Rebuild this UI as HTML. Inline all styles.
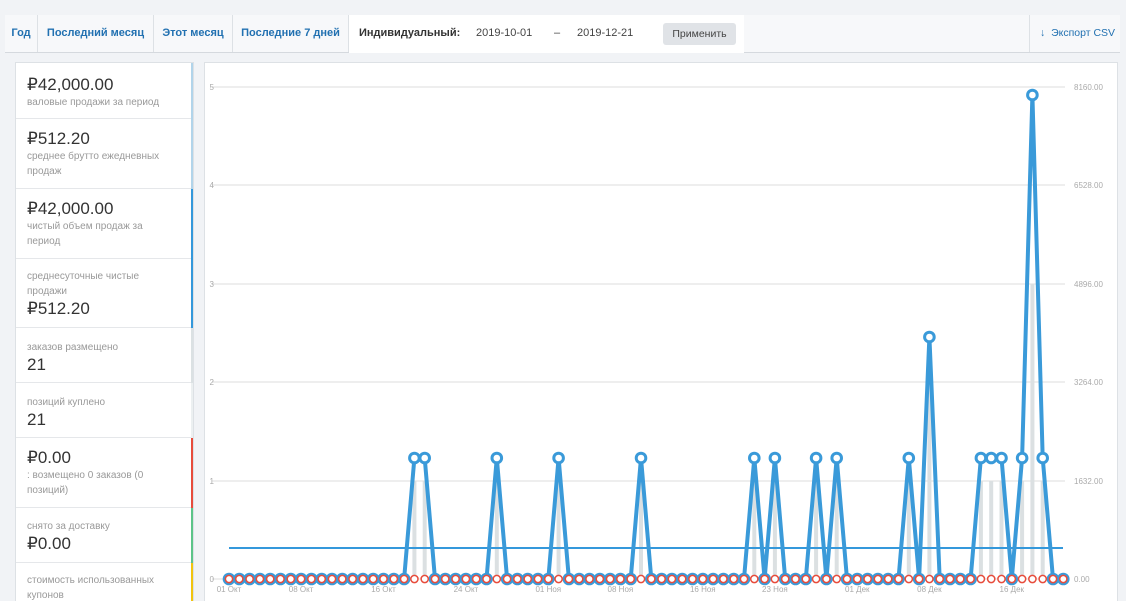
<!DOCTYPE html>
<html style="width:1126px;height:601px;overflow:hidden"><head><meta charset="utf-8"><style>
*{box-sizing:border-box;margin:0;padding:0}
body{width:1126px;height:601px;overflow:hidden;background:#f1f3f6;font-family:"Liberation Sans",sans-serif;position:relative}
.tabs{position:absolute;left:5px;top:15px;width:1115px;height:38px;background:#f7f8fa;border-bottom:1px solid #d5d9de}
.tab{position:absolute;top:0;height:37px;line-height:37px;font-size:11px;color:#2271b1;font-weight:bold;border-right:1px solid #dde1e5;text-align:center}
.active{position:absolute;left:344px;top:0;width:395px;height:38px;background:#fff;font-size:11px}
.sb{position:absolute;left:15px;top:62px;width:179px;height:545px;background:#fff;border:1px solid #dde1e5;border-bottom:0;overflow:hidden}
.row{position:absolute;left:0;width:179px;border-bottom:1px solid #e5e7ea;padding:0 30px 0 11px}
.row .bar{position:absolute;right:0;top:0;bottom:-1px;width:4px}
.big{font-size:17px;color:#333;line-height:20px}
.sm{font-size:10px;color:#999;line-height:15px}
.chart{position:absolute;left:204px;top:62px;width:914px;height:545px;background:#fff;border:1px solid #dde1e5;border-bottom:0}
</style></head><body>
<div class="tabs">
<div class="tab" style="left:0;width:33px">Год</div>
<div class="tab" style="left:33px;width:116px">Последний месяц</div>
<div class="tab" style="left:149px;width:79px">Этот месяц</div>
<div class="tab" style="left:228px;width:116px">Последние 7 дней</div>
<div class="active">
<span style="position:absolute;left:10px;top:12px;font-weight:bold;color:#333">Индивидуальный:</span>
<span style="position:absolute;left:127px;top:12px;color:#444">2019-10-01</span>
<span style="position:absolute;left:205px;top:12px;color:#444">–</span>
<span style="position:absolute;left:228px;top:12px;color:#444">2019-12-21</span>
<span style="position:absolute;left:314px;top:8px;width:73px;height:22px;background:#e0e3e7;border-radius:3px;font-size:10.5px;color:#444;text-align:center;line-height:22px">Применить</span>
</div>
<div style="position:absolute;left:1024px;top:0;height:37px;border-left:1px solid #dde1e5;padding-left:10px;line-height:37px;font-size:10.5px;color:#2271b1">↓&nbsp; Экспорт CSV</div>
</div>
<div class="sb">
<div class="row" style="top:0;height:56px;padding-top:12px"><div class="big">₽42,000.00</div><div class="sm">валовые продажи за период</div><div class="bar" style="background:#b1d4ea"></div></div>
<div class="row" style="top:56px;height:70px;padding-top:10px"><div class="big">₽512.20</div><div class="sm">среднее брутто ежедневных продаж</div><div class="bar" style="background:#b1d4ea"></div></div>
<div class="row" style="top:126px;height:70px;padding-top:10px"><div class="big">₽42,000.00</div><div class="sm">чистый объем продаж за период</div><div class="bar" style="background:#3498db"></div></div>
<div class="row" style="top:196px;height:69px;padding-top:10px"><div class="sm">среднесуточные чистые продажи</div><div class="big">₽512.20</div><div class="bar" style="background:#3498db"></div></div>
<div class="row" style="top:265px;height:55px;padding-top:12px"><div class="sm">заказов размещено</div><div class="big">21</div><div class="bar" style="background:#dbe1e3"></div></div>
<div class="row" style="top:320px;height:55px;padding-top:12px"><div class="sm">позиций куплено</div><div class="big">21</div><div class="bar" style="background:#ecf0f1"></div></div>
<div class="row" style="top:375px;height:70px;padding-top:10px"><div class="big">₽0.00</div><div class="sm">: возмещено 0 заказов (0 позиций)</div><div class="bar" style="background:#e74c3c"></div></div>
<div class="row" style="top:445px;height:55px;padding-top:11px"><div class="sm">снято за доставку</div><div class="big">₽0.00</div><div class="bar" style="background:#5cc488"></div></div>
<div class="row" style="top:500px;height:50px;padding-top:10px;border:none"><div class="sm">стоимость использованных купонов</div><div class="bar" style="background:#f1c40f"></div></div>
</div>
<div class="chart"></div>
<svg id="g" width="1126" height="601" style="position:absolute;left:0;top:0" font-family="Liberation Sans,sans-serif"></svg>
<script>
var s='',X=function(i){return 229+i*10.3};
var gy=[579,481,382,284,185,87],rl=['0.00','1632.00','3264.00','4896.00','6528.00','8160.00'];
for(var k=0;k<6;k++){s+='<line x1="212" x2="1065" y1="'+gy[k]+'" y2="'+gy[k]+'" stroke="#e8e8e8" stroke-width="1.5"/><text x="214" y="'+(gy[k]+3)+'" font-size="8" fill="#aaa" text-anchor="end">'+k+'</text><text x="1074" y="'+(gy[k]+3)+'" font-size="8" fill="#aaa">'+rl[k]+'</text>';}
var pk={18:458,19:458,26:458,32:458,40:458,51:458,53:458,57:458,59:458,66:458,68:337,73:458,74:458,75:458,77:458,78:95,79:458};
var bh={68:382,78:284};
for(var i in pk){s+='<rect x="'+(X(+i)-2)+'" y="'+(bh[i]||481)+'" width="4" height="'+(579-(bh[i]||481))+'" fill="#dbe0e2"/>';}
s+='<line x1="229" x2="1063" y1="548" y2="548" stroke="#3498db" stroke-width="2"/>';
var p=[];for(var i=0;i<82;i++)p.push(X(i)+','+(pk[i]||579));
s+='<polyline points="'+p.join(' ')+'" fill="none" stroke="#3a9ad9" stroke-width="4" stroke-linejoin="round"/>';
for(var i=0;i<82;i++){var y=pk[i]||579;s+='<circle cx="'+X(i)+'" cy="'+y+'" r="4.8" fill="#fff" stroke="#3a9ad9" stroke-width="3"/>';}
for(var i=0;i<82;i++){s+='<circle cx="'+X(i)+'" cy="579" r="3.6" fill="#fff" stroke="#e74c3c" stroke-width="1.5"/>';}
var lb={0:'01 Окт',7:'08 Окт',15:'16 Окт',23:'24 Окт',31:'01 Ноя',38:'08 Ноя',46:'16 Ноя',53:'23 Ноя',61:'01 Дек',68:'08 Дек',76:'16 Дек'};
for(var i in lb)s+='<text x="'+X(+i)+'" y="592" font-size="8" fill="#aaa" text-anchor="middle">'+lb[i]+'</text>';
document.getElementById('g').innerHTML=s;
</script>
</body></html>
